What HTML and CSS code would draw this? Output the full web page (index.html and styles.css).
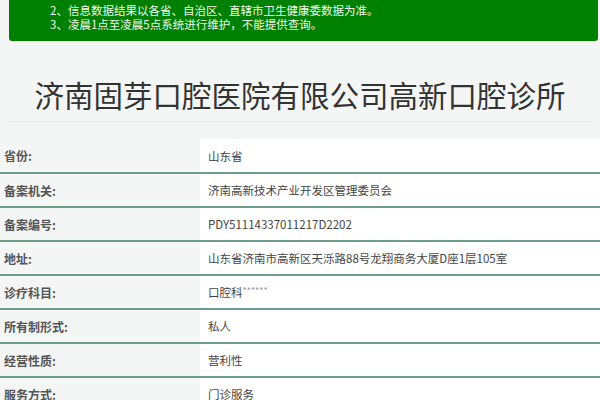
FILE: index.html
```html
<!DOCTYPE html>
<html lang="zh-CN">
<head>
<meta charset="utf-8">
<title>济南固芽口腔医院有限公司高新口腔诊所</title>
<link rel="stylesheet" href="styles.css">
</head>
<body>
<div class="notice">
  <p>2、信息数据结果以各省、自治区、直辖市卫生健康委数据为准。</p>
  <p>3、凌晨1点至凌晨5点系统进行维护，不能提供查询。</p>
</div>
<h1 class="title">济南固芽口腔医院有限公司高新口腔诊所</h1>
<table class="info">
  <tr><th>省份:</th><td>山东省</td></tr>
  <tr><th>备案机关:</th><td>济南高新技术产业开发区管理委员会</td></tr>
  <tr><th>备案编号:</th><td>PDY51114337011217D2202</td></tr>
  <tr><th>地址:</th><td>山东省济南市高新区天泺路88号龙翔商务大厦D座1层105室</td></tr>
  <tr><th>诊疗科目:</th><td>口腔科<span class="stars">******</span></td></tr>
  <tr><th>所有制形式:</th><td>私人</td></tr>
  <tr><th>经营性质:</th><td>营利性</td></tr>
  <tr><th>服务方式:</th><td>门诊服务</td></tr>
</table>
</body>
</html>
```
FILE: styles.css
```css
html, body {
  margin: 0;
  padding: 0;
}
body {
  background: #f4f5f5;
  font-family: "Microsoft YaHei", "Noto Sans CJK SC", "Noto Sans", sans-serif;
  color: #444;
}
.notice {
  margin: 0 2px 0 9px;
  padding: 3px 0 10px 41px;
  background: #008000;
  border-radius: 0 0 3px 3px;
  color: #eef8ea;
  font-size: 11.5px;
  line-height: 14px;
}
.notice p {
  margin: 0;
}
.title {
  margin: 0 8px;
  height: 81px;
  border-bottom: 1px solid #e6e8e8;
  font-size: 29.5px;
  font-weight: normal;
  line-height: 30px;
  padding: 0 0 12px;
  color: #333;
  display: flex;
  align-items: flex-end;
  justify-content: center;
  box-sizing: border-box;
}
.info {
  width: 100%;
  margin-top: 17px;
  border-collapse: collapse;
  font-size: 11.5px;
}
.info tr {
  height: 34px;
  border-bottom: 2px solid #6e9e8a;
}
.info th {
  width: 200px;
  text-align: left;
  font-weight: bold;
  font-size: 12px;
  color: #555;
  padding: 0 0 0 4px;
  box-sizing: border-box;
}
.info td {
  background: #fff;
  padding: 0 0 0 8px;
  color: #444;
}
.stars {
  font-size: 9px;
  color: #999;
  vertical-align: 3px;
}
```
